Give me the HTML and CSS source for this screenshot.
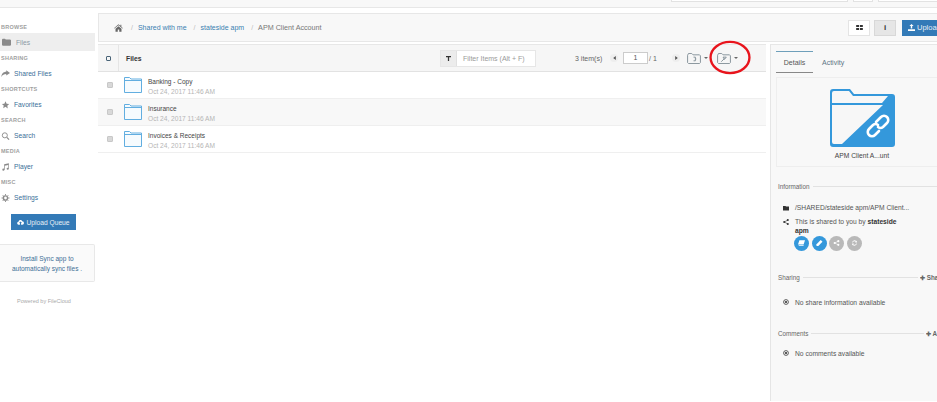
FILE: index.html
```html
<!DOCTYPE html>
<html lang="en">
<head>
<meta charset="utf-8">
<title>APM Client Account</title>
<link rel="stylesheet" href="styles.css">
</head>
<body>
<header class="topbar">
  <span class="topbox tb1"></span><span class="topbox tb2"></span><span class="topbox tb3"></span>
</header>
<div class="app">
  <aside class="sidebar">
    <div class="nav-label">BROWSE</div>
    <a class="nav-item active"><svg class="nav-icon" viewBox="0 0 12 10"><path d="M0 1.500 1 .5h3l1 1h6l1 1V9l-1 1H1L0 9z"/></svg><span class="muted-link">Files</span></a>
    <div class="nav-label">SHARING</div>
    <a class="nav-item"><svg class="nav-icon" viewBox="0 0 12 10"><path d="M7 0l5 3.500L7 7V5C4 5 2 6 .5 9 .5 5 3 2 7 2z"/></svg><span>Shared Files</span></a>
    <div class="nav-label">SHORTCUTS</div>
    <a class="nav-item"><svg class="nav-icon" viewBox="0 0 12 12"><path d="M6 .5l1.700 3.600 3.800.5-2.800 2.700.7 3.900L6 8.800l-3.400 1.900.7-3.900L.5 4.600l3.800-.5z"/></svg><span>Favorites</span></a>
    <div class="nav-label">SEARCH</div>
    <a class="nav-item"><svg class="nav-icon" viewBox="0 0 12 12"><circle cx="5" cy="5" r="3.800" fill="none" stroke="#8a8a8a" stroke-width="1.400"/><path d="M8 8l3.400 3.400" stroke="#8a8a8a" stroke-width="1.800"/></svg><span>Search</span></a>
    <div class="nav-label">MEDIA</div>
    <a class="nav-item"><svg class="nav-icon" viewBox="0 0 12 12"><path d="M4 2l7-1.500v8h-1V3L5 4v6H4z"/><circle cx="2.800" cy="10" r="1.600"/><circle cx="9.300" cy="8.700" r="1.600"/></svg><span>Player</span></a>
    <div class="nav-label">MISC</div>
    <a class="nav-item"><svg class="nav-icon" viewBox="0 0 12 12"><circle cx="6" cy="6" r="3.200" fill="none" stroke="#8a8a8a" stroke-width="2.200"/><path d="M6 0v12M0 6h12M1.800 1.800l8.400 8.400M10.200 1.800l-8.400 8.400" stroke="#8a8a8a" stroke-width="1.300" stroke-dasharray="2 8"/></svg><span>Settings</span></a>
    <button class="queue-btn"><svg class="btn-icon" viewBox="0 0 12 10"><path d="M3 9.500a2.500 2.500 0 0 1-.5-5A3.500 3.500 0 0 1 9 3.500a3 3 0 0 1 0 6H7V6.500h1.500L6 4 3.500 6.500H5v3z"/></svg>Upload Queue</button>
    <div class="sync-card">Install Sync app to<br>automatically sync files .</div>
    <div class="powered">Powered by FileCloud</div>
  </aside>
  <main class="main">
    <div class="crumbs">
      <svg class="home" viewBox="0 0 12 10"><path d="M6 0l2.500 2.200V.8h1.300v2.500L12 5.200l-.6.600L6 1.300.6 5.800 0 5.200zM2 6l4-3.300L10 6v4H7V7H5v3H2z"/></svg>
      <span class="sep">/</span><a>Shared with me</a>
      <span class="sep">/</span><a>stateside apm</a>
      <span class="sep">/</span><span class="current">APM Client Account</span>
      <div class="crumb-actions">
        <span class="view-btn"><svg viewBox="0 0 8 6"><path d="M0 0h3.500v2.500H0zM4.500 0H8v2.500H4.500zM0 3.500h3.500V6H0zM4.500 3.500H8V6H4.500z"/></svg></span>
        <span class="view-btn on"><b>i</b></span>
        <span class="upload-btn"><svg class="btn-icon" viewBox="0 0 10 10"><path d="M5 0l3 3H6v3.500H4V3H2zM0 7.500h10V10H0z"/></svg>Upload</span>
      </div>
    </div>
    <div class="content">
      <section class="files">
        <div class="files-head">
          <span class="head-check"><i class="box"></i></span>
          <span class="head-title">Files</span>
          <div class="filter"><span class="filter-icon"><svg viewBox="0 0 8 8"><path d="M0 0h8v1.800H5V8H3V1.800H0z"/></svg></span><span class="filter-input">Filter Items (Alt + F)</span></div>
          <span class="count">3 item(s)</span>
          <span class="pager"><svg viewBox="0 0 4 6"><path d="M4 0v6L0 3z"/></svg></span>
          <span class="page-input">1</span>
          <span class="page-total">/ 1</span>
          <span class="pager next"><svg viewBox="0 0 4 6"><path d="M0 0v6l4-3z"/></svg></span>
          <svg class="tool first" viewBox="0 0 15 12"><path d="M.5 2.500 1.500.5h3.500l1.500 1.500h7l1 1v7.500l-1 1h-12l-1-1z"/><path d="M7 4.500h2v4H7M9 6.500h1"/></svg><i class="caret"></i>
          <svg class="tool" viewBox="0 0 15 12"><path d="M.5 2.500 1.500.5h3.500l1.500 1.500h7l1 1v7.500l-1 1h-12l-1-1z"/><path d="M4.500 9.500l3.500-3.500M6.500 4.500h3.500l-2 2.500z"/></svg><i class="caret"></i>
        </div>
        <div class="row">
          <i class="row-check"></i>
          <svg class="folder" viewBox="0 0 18 16"><path d="M.5 15.500V.5h5l1.500 1.500h10.500v13.500zM.5 3.500h17"/></svg>
          <div class="row-text"><div class="row-name">Banking - Copy</div><div class="row-date">Oct 24, 2017 11:46 AM</div></div>
        </div>
        <div class="row alt">
          <i class="row-check"></i>
          <svg class="folder" viewBox="0 0 18 16"><path d="M.5 15.500V.5h5l1.500 1.500h10.500v13.500zM.5 3.500h17"/></svg>
          <div class="row-text"><div class="row-name">Insurance</div><div class="row-date">Oct 24, 2017 11:46 AM</div></div>
        </div>
        <div class="row">
          <i class="row-check"></i>
          <svg class="folder" viewBox="0 0 18 16"><path d="M.5 15.500V.5h5l1.500 1.500h10.500v13.500zM.5 3.500h17"/></svg>
          <div class="row-text"><div class="row-name">Invoices &amp; Receipts</div><div class="row-date">Oct 24, 2017 11:46 AM</div></div>
        </div>
      </section>
      <aside class="details">
        <div class="tabs"><span class="tab active">Details</span><span class="tab">Activity</span></div>
        <div class="preview">
          <svg class="big-folder" viewBox="0 0 65 58"><path fill="#3498db" d="M3 0h17l4 5h38a3 3 0 0 1 3 3v47a3 3 0 0 1-3 3H3a3 3 0 0 1-3-3V3a3 3 0 0 1 3-3z"/><path fill="#f7f7f7" d="M2 16h51L12 55H4a2 2 0 0 1-2-2zM2 14V4a2 2 0 0 1 2-2h15l4 5h35l-6 7z"/><g fill="none" stroke="#fff" stroke-width="2.600" stroke-linecap="round"><path d="M46 33l5-5a4 4 0 0 1 6 6l-4 4a4 4 0 0 1-5 0"/><path d="M49 42l-4 4a4 4 0 0 1-6-6l4-4a4 4 0 0 1 5 0"/></g></svg>
          <div class="preview-name">APM Client A...unt</div>
        </div>
        <div class="section-head information"><span>Information</span><i class="rule"></i></div>
        <div class="info-row path"><svg class="info-icon" viewBox="0 0 12 10"><path d="M0 1h5l1 1h6v8H0z"/></svg><span>/SHARED/stateside apm/APM Client...</span></div>
        <div class="info-row shared"><svg class="info-icon" viewBox="0 0 10 10"><circle cx="8" cy="1.800" r="1.700"/><circle cx="2" cy="5" r="1.700"/><circle cx="8" cy="8.200" r="1.700"/><path d="M8 1.800 2 5l6 3.200" fill="none" stroke="#333"/></svg><span>This is shared to you by <b>stateside apm</b></span></div>
        <div class="actions">
          <span class="act blue"><svg viewBox="0 0 10 8"><path d="M2 0h8L8 6H0zM1 7h7v1H1z"/></svg></span>
          <span class="act blue"><svg viewBox="0 0 10 10"><path d="M7 0l3 3-7 7H0V7z"/></svg></span>
          <span class="act grey"><svg viewBox="0 0 10 10"><circle cx="8" cy="2" r="1.800"/><circle cx="2" cy="5" r="1.800"/><circle cx="8" cy="8" r="1.800"/><path d="M8 2 2 5l6 3" fill="none" stroke="#fff"/></svg></span>
          <span class="act grey"><svg viewBox="0 0 10 10"><path d="M1 4a4 4 0 0 1 7-2l1-1v3H6l1-1a3 3 0 0 0-5 1zM9 6a4 4 0 0 1-7 2l-1 1V6h3L3 7a3 3 0 0 0 5-1z"/></svg></span>
        </div>
        <div class="section-head sharing"><span>Sharing</span><i class="rule"></i><b class="add">✚ Share</b></div>
        <div class="note share-note"><svg class="note-icon" viewBox="0 0 10 10"><circle cx="5" cy="5" r="4" fill="none" stroke="#333" stroke-width="1.300"/><circle cx="5" cy="5" r="1.800"/></svg><span>No share information available</span></div>
        <div class="section-head comments"><span>Comments</span><i class="rule"></i><b class="add short">✚ Add</b></div>
        <div class="note comment-note"><svg class="note-icon" viewBox="0 0 10 10"><circle cx="5" cy="5" r="4" fill="none" stroke="#333" stroke-width="1.300"/><circle cx="5" cy="5" r="1.800"/></svg><span>No comments available</span></div>
      </aside>
    </div>
  </main>
</div>
<svg class="annotation" viewBox="0 0 44 36"><ellipse cx="22" cy="18" rx="20" ry="16" fill="none" stroke="#e8141c" stroke-width="2.400"/></svg>
</body>
</html>
```

FILE: styles.css
```css
* { box-sizing: border-box; }
html, body { margin: 0; height: 100%; }
body {
  width: 937px;
  height: 402px;
  overflow: hidden;
  position: relative;
  background: #fff;
  font-family: "Liberation Sans", Arial, sans-serif;
  font-size: 7px;
  color: #555;
}
.topbar {
  height: 8px;
  background: #f8f8f8;
  border-bottom: 1px solid #e7e7e7;
  display: flex;
  justify-content: flex-end;
  align-items: flex-start;
}
.topbox { height: 2px; border: 1px solid #e2e2e2; border-top: 0; background: #fff; }
.tb1 { width: 177px; margin-right: 5px; }
.tb2 { width: 20px; margin-right: 5px; }
.tb3 { width: 60px; margin-right: -1px; }
.app { display: flex; height: 394px; }
.sidebar { width: 98px; flex: none; padding-top: 14px; }
.nav-label {
  font-size: 5.500px;
  font-weight: bold;
  color: #a0a0a0;
  letter-spacing: .25px;
  height: 10px;
  line-height: 10px;
  padding-left: 1px;
}
.nav-item {
  display: flex;
  align-items: center;
  height: 21px;
  width: 95px;
  font-size: 6.700px;
  color: #3a6f99;
}
.nav-item.active { height: 18px; margin-top: 1px; margin-bottom: 2px; background: #eeeeee; }
.nav-item .muted-link { color: #8c9aa5; margin-left: 1px; }
.nav-icon { width: 9px; height: 8px; margin: 0 4px 0 1px; fill: #8a8a8a; flex: none; }
.nav-item.active .nav-icon { margin-left: 2px; }
.queue-btn {
  display: flex;
  align-items: center;
  justify-content: center;
  width: 65px;
  height: 16px;
  margin: 6px 0 0 11px;
  padding: 0;
  border: 0;
  background: #337ab7;
  color: #e8eff6;
  font: 6.700px "Liberation Sans", Arial, sans-serif;
}
.btn-icon { width: 7px; height: 6px; margin-right: 2px; fill: #fff; }
.sync-card {
  width: 95px;
  height: 38px;
  margin-top: 14px;
  padding-top: 9px;
  background: #fafafa;
  border: 1px solid #e8e8e8;
  border-left: 0;
  border-radius: 0 2px 2px 0;
  text-align: center;
  font-size: 6.500px;
  line-height: 9.500px;
  color: #3e6f96;
}
.powered { width: 88px; margin-top: 16px; text-align: center; font-size: 5.500px; color: #aaa; }
.main { flex: 1; min-width: 0; padding-top: 5px; }
.crumbs {
  height: 29px;
  display: flex;
  align-items: center;
  background: #f8f8f8;
  border: 1px solid #e7e7e7;
  border-width: 1px 0 1px 1px;
  padding-left: 15px;
  font-size: 7px;
  color: #3a7fb0;
}
.home { width: 9px; height: 8px; fill: #666; margin-right: 8px; }
.sep { color: #bbb; margin-right: 5px; }
.crumbs a { margin-right: 7px; }
.current { color: #777; font-size: 7.200px; }
.crumb-actions { margin-left: auto; display: flex; align-items: center; gap: 4px; }
.view-btn {
  width: 22px;
  height: 16px;
  display: flex;
  align-items: center;
  justify-content: center;
  background: #fff;
  border: 1px solid #e4e4e4;
}
.view-btn svg { width: 7px; height: 5px; fill: #333; }
.view-btn.on { background: #e6e6e6; border-color: #d8d8d8; }
.view-btn b { font-size: 8px; color: #333; }
.upload-btn {
  width: 35px;
  height: 16px;
  margin-left: 2px;
  display: flex;
  align-items: center;
  padding-left: 6px;
  background: #337ab7;
  color: #e8eff6;
  font-size: 7.500px;
  white-space: nowrap;
  overflow: hidden;
}
.upload-btn .btn-icon { height: 7px; flex: none; }
.content { display: flex; margin-top: 2px; }
.files { width: 668px; flex: none; margin-right: 4px; }
.files-head {
  height: 28px;
  display: flex;
  align-items: center;
  background: #f6f6f6;
  border-top: 1px solid #e7e7e7;
  border-bottom: 1px solid #e2e2e2;
}
.head-check {
  width: 21px;
  height: 100%;
  display: flex;
  align-items: center;
  justify-content: center;
  border-right: 1px solid #e5e5e5;
}
.box { width: 5px; height: 5px; border: 1px solid #4a6478; border-radius: 1px; }
.head-title { margin-left: 7px; width: 314px; font-size: 6.800px; font-weight: bold; color: #333; }
.filter { display: flex; height: 17px; border: 1px solid #e6e6e6; background: #fff; width: 96px; }
.filter-icon { width: 16px; display: flex; align-items: center; justify-content: center; background: #ececec; border-right: 1px solid #e0e0e0; }
.filter-icon svg { width: 5px; height: 5px; fill: #333; }
.filter-input { padding-left: 6px; line-height: 15px; font-size: 7px; color: #9a9a9a; white-space: nowrap; }
.count { margin-left: 39px; width: 35px; font-size: 7px; color: #666; white-space: nowrap; }
.pager {
  width: 8px;
  height: 8px;
  border-radius: 50%;
  background: #eee;
  display: flex;
  align-items: center;
  justify-content: center;
}
.pager svg { width: 3px; height: 4px; fill: #555; }
.page-input {
  width: 25px;
  height: 12px;
  margin-left: 5px;
  background: #fff;
  border: 1px solid #ccc;
  text-align: center;
  line-height: 10px;
  font-size: 7px;
  color: #555;
}
.page-total { width: 23px; margin-left: 1px; font-size: 7px; color: #666; white-space: nowrap; }
.tool { width: 14px; height: 11px; fill: none; stroke: #7f8c95; stroke-width: 1; margin-left: 9px; flex: none; }
.tool.first { margin-left: 7px; }
.caret { width: 0; height: 0; margin-left: 3px; border: 2px solid transparent; border-top-color: #666; border-bottom: 0; }
.row {
  height: 27px;
  display: flex;
  align-items: center;
  border-bottom: 1px solid #efefef;
}
.row.alt { background: #f8f8f8; }
.row-check { width: 6px; height: 6px; margin-left: 9px; background: #d8d8d8; border: 1px solid #c8c8c8; border-radius: 1px; flex: none; }
.folder { width: 18px; height: 16px; margin-left: 11px; fill: #f6fbfe; stroke: #62aee0; stroke-width: 1; flex: none; }
.row-text { margin-left: 6px; padding-top: 3px; }
.row-name { font-size: 6.500px; line-height: 10px; color: #444; }
.row-date { font-size: 6.600px; line-height: 10px; color: #b5b5b5; }
.details {
  flex: 1;
  min-width: 0;
  height: 357px;
  padding: 6px 0 0 5px;
  background: #f8f8f8;
  border-left: 1px solid #e5e5e5;
  border-top: 1px solid #e7e7e7;
  overflow: hidden;
}
.tabs { display: flex; height: 22px; }
.tab { display: flex; align-items: center; margin-left: 9px; font-size: 7px; color: #5c7585; }
.tab.active { justify-content: center; width: 37px; margin-left: 0; color: #555; border-top: 1px solid #6e9fba; border-bottom: 1px solid #888; }
.preview {
  height: 90px;
  margin-top: 4px;
  margin-right: -10px;
  padding-top: 11px;
  background: #f8f8f8;
  border: 1px solid #eeeeee;
}
.big-folder { display: block; width: 65px; height: 58px; margin-left: 53px; }
.preview-name { width: 170px; margin-top: 5px; text-align: center; font-size: 6.700px; color: #444; }
.section-head {
  display: flex;
  align-items: center;
  margin-left: 2px;
  font-size: 6.300px;
  color: #666;
  height: 10px;
  white-space: nowrap;
}
.section-head.information { margin-top: 14px; }
.rule { flex: 1; height: 1px; margin-left: 3px; background: #e2e2e2; }
.info-row { display: flex; margin-left: 7px; font-size: 6.700px; color: #555; line-height: 9.500px; }
.info-row b { color: #333; }
.info-row.path { margin-top: 12px; white-space: nowrap; }
.info-row.shared { margin-top: 4px; width: 120px; }
.info-icon { width: 6px; height: 6px; margin: 2px 6px 0 0; fill: #333; flex: none; }
.actions { display: flex; gap: 2.600px; margin-left: 18px; }
.act {
  width: 15px;
  height: 15px;
  border-radius: 50%;
  display: flex;
  align-items: center;
  justify-content: center;
}
.act svg { width: 7px; height: 6px; fill: #fff; }
.act.blue { background: #3498db; }
.act.grey { background: #b9b9b9; }
.section-head.sharing { margin-top: 22px; }
.section-head.comments { margin-top: 23px; }
.add { font-weight: bold; color: #666; margin-left: 2px; width: 17px; overflow: hidden; flex: none; }
.add.short { width: 11px; }
.note { display: flex; align-items: center; margin-left: 7px; font-size: 6.700px; color: #555; }
.note-icon { width: 6px; height: 6px; margin-right: 6px; fill: #333; }
.share-note { margin-top: 16px; }
.comment-note { margin-top: 11px; }
.annotation { position: absolute; left: 708px; top: 40px; width: 44px; height: 35px; pointer-events: none; }
```
